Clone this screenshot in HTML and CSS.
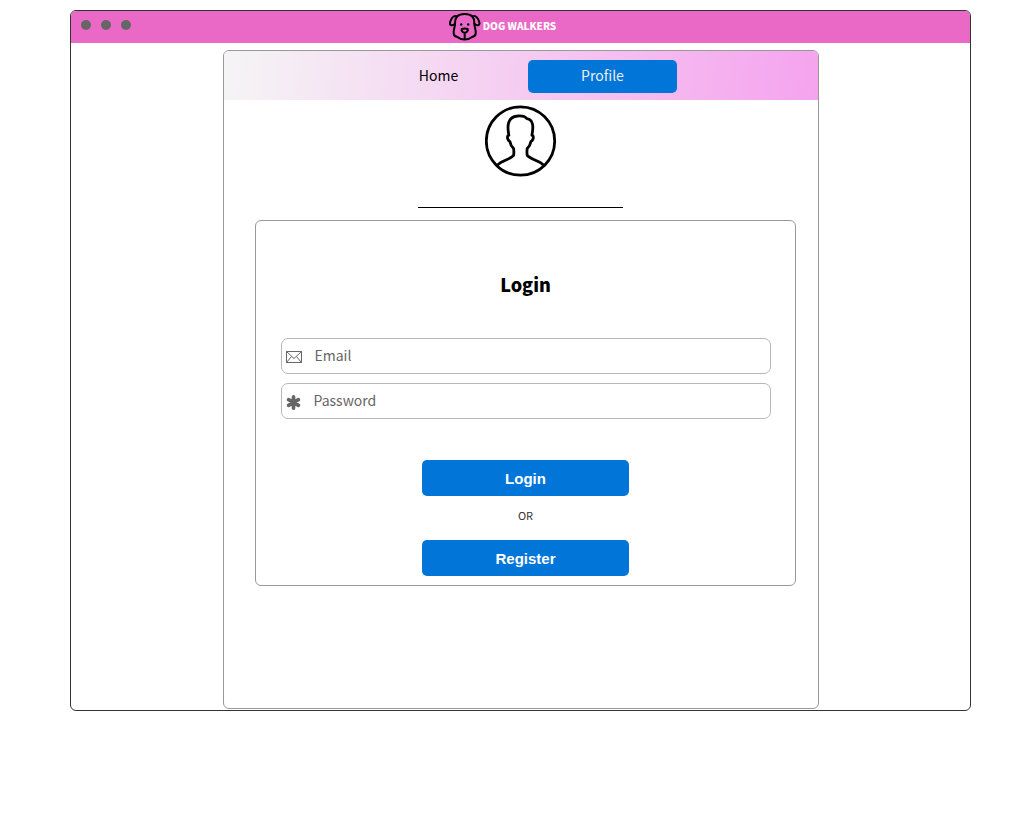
FILE: index.html
```html
<!DOCTYPE html>
<html lang="en">
<head>
<meta charset="utf-8">
<meta name="viewport" content="width=device-width, initial-scale=1">
<title>Dog Walkers</title>
<link rel="stylesheet" href="styles.css">
</head>
<body>
<div class="window">
  <header class="titlebar">
    <div class="dots"><span class="dot"></span><span class="dot"></span><span class="dot"></span></div>
    <div class="brand">
      <svg class="brand-logo" viewBox="0 0 32 28" aria-hidden="true">
        <path d="M8 3.500C10 1.500 12.500 1 15.700 1s5.700.5 7.700 2.500c2.600 3 1.600 6 2.100 9 .5 2.500 1.500 4.500 1.200 8-.3 2.300-1.700 3.200-3.700 3.500-1.800 1.600-4.300 2.500-7.300 2.500s-5.500-.9-7.300-2.500c-2-.3-3.400-1.200-3.700-3.500-.3-3.500.7-5.500 1.200-8 .5-3-.5-6 2.100-9Z"/>
        <path d="M8 3.500C4.500 1.800 2 5.500 1 9.500c-.7 2.800 2.600 4.200 5 1M23.400 3.500c3.500-1.700 6 2 7 6 .7 2.800-2.600 4.200-5 1"/>
        <path d="M12.700 16c1.800-.7 4.200-.7 6 0 .6 1.500-.8 3.700-3 3.700s-3.600-2.200-3-3.700ZM15.700 20v5.500"/>
        <circle class="eye" cx="12.200" cy="11.500" r="1.200"/><circle class="eye" cx="19.200" cy="11.500" r="1.200"/>
      </svg>
      <span class="brand-name">DOG WALKERS</span>
    </div>
  </header>
  <main class="panel">
    <nav class="tabs">
      <a class="tab" href="#home">Home</a>
      <a class="tab tab-active" href="#profile" aria-current="page">Profile</a>
    </nav>
    <svg class="avatar" viewBox="0 0 72 72" aria-hidden="true">
      <circle cx="35.500" cy="36" r="34.200"/>
      <path d="M12.500 60c4-4.500 11.500-5 16-9.500.7-2.500.3-5 .1-7-2-1.800-3.300-4.500-3.700-7-2-1-3-3.800-2-5.800l1-.5c-1.500-7-1.300-13 2-16.500 3.500-3.500 13-4 16 0 7 1 6.500 9 5 16.500l1 .5c1 2 0 4.800-2 5.800-.4 2.500-1.700 5.200-3.700 7-.2 2-.6 4.500.1 7C46.800 55 54.500 55.500 58.500 60"/>
    </svg>
    <hr class="rule">
    <form class="card">
      <h1 class="heading">Login</h1>
      <label class="field">
        <svg class="mail" viewBox="0 0 16 12" aria-hidden="true"><path d="M.5.5h15v11H.5ZM.5.500 8 7.500 15.500.5M.5 11.500 5.500 5.500M15.500 11.500l-5-6"/></svg>
        <input class="field-input" type="email" placeholder="Email" aria-label="Email">
      </label>
      <label class="field">
        <svg class="star" viewBox="0 0 14 14" aria-hidden="true"><path d="M7 1.700v10.600M2.400 4.300l9.200 5.400M2.400 9.700l9.200-5.400"/></svg>
        <input class="field-input" type="password" placeholder="Password" aria-label="Password">
      </label>
      <div class="actions">
        <button class="button" type="submit">Login</button>
        <span class="or">OR</span>
        <button class="button" type="button">Register</button>
      </div>
    </form>
  </main>
</div>
</body>
</html>
```
FILE: styles.css
```css
* { box-sizing: border-box; }

body {
  margin: 0;
  padding: 10px 49px 10px 70px;
  background: #fff;
  color: #000;
  font-family: "Noto Sans CJK SC", "Noto Sans", sans-serif;
}

.window {
  border: 1px solid #333;
  border-radius: 6px;
  padding-bottom: 1px;
  overflow: hidden;
}

.titlebar {
  display: grid;
  grid-template-columns: 1fr auto 1fr;
  align-items: center;
  height: 32px;
  background: #ea69c6;
}

.dots {
  display: flex;
  gap: 10px;
  padding: 0 0 4px 10px;
}

.dot {
  width: 10px;
  height: 10px;
  border-radius: 50%;
  background: #666;
}

.brand {
  display: flex;
  align-items: center;
  gap: 2px;
  padding-right: 36px;
  color: #fff;
  font-size: 10px;
  font-weight: 900;
  line-height: 16px;
}

.brand-name {
  padding-bottom: 2px;
}

.brand-logo {
  width: 32px;
  height: 28px;
  fill: none;
  stroke: #000;
  stroke-width: 2;
  stroke-linejoin: round;
  stroke-linecap: round;
}

.brand-logo .eye {
  fill: #000;
  stroke: none;
}

.panel {
  display: flex;
  flex-direction: column;
  align-items: center;
  width: 100%;
  max-width: 596px;
  min-height: 659px;
  margin: 7px auto 0;
  border: 1px solid #999;
  border-radius: 6px;
}

.tabs {
  display: flex;
  justify-content: center;
  align-items: center;
  align-self: stretch;
  gap: 15px;
  height: 49px;
  padding-top: 2px;
  border-radius: 5px 5px 0 0;
  background: linear-gradient(95deg, #f5f5f5, #f5a3ee);
}

.tab {
  width: 149px;
  padding-bottom: 2px;
  border-radius: 5px;
  color: #000;
  font-size: 14px;
  line-height: 31px;
  text-align: center;
  text-decoration: none;
}

.tab-active {
  background: #0275d8;
  color: #eee;
}

.avatar {
  width: 72px;
  height: 72px;
  margin-top: 5px;
  fill: none;
  stroke: #000;
  stroke-width: 2.800;
  stroke-linejoin: round;
}

.rule {
  width: 205px;
  height: 1px;
  margin: 30px 0 12px;
  border: 0;
  background: #000;
}

.card {
  display: flex;
  flex-direction: column;
  align-self: stretch;
  gap: 9px;
  margin: 0 22px 0 31px;
  padding: 50px 24px 9px 25px;
  border: 1px solid #999;
  border-radius: 6px;
}

.heading {
  margin: 0 0 32px;
  font-size: 18px;
  font-weight: 900;
  line-height: 26px;
  text-align: center;
}

.field {
  display: flex;
  align-items: center;
  gap: 13px;
  height: 36px;
  padding: 0 4px;
  border: 1px solid #b8b8b8;
  border-radius: 7px;
}

.mail,
.star {
  flex: none;
  margin-top: 2px;
  fill: none;
  stroke: #666;
}

.mail {
  width: 16px;
  height: 12px;
}

.star {
  width: 15px;
  height: 15px;
  stroke-width: 3.400;
  stroke-linecap: round;
}

.field-input {
  flex: 1;
  min-width: 0;
  padding: 0 0 2px;
  border: 0;
  outline: 0;
  background: transparent;
  color: #333;
  font: inherit;
  font-size: 14px;
}

.field-input::placeholder {
  color: #666;
  opacity: 1;
}

.actions {
  display: flex;
  flex-direction: column;
  align-items: center;
  margin-top: 32px;
}

.button {
  width: 207px;
  height: 36px;
  padding: 0;
  border: 0;
  border-radius: 5px;
  background: #0275d8;
  color: #fff;
  font-family: "Liberation Sans", Arial, sans-serif;
  font-size: 15px;
  font-weight: 700;
}

.or {
  padding: 9px 0 15px;
  color: #333;
  font-size: 11px;
  line-height: 20px;
}
```
